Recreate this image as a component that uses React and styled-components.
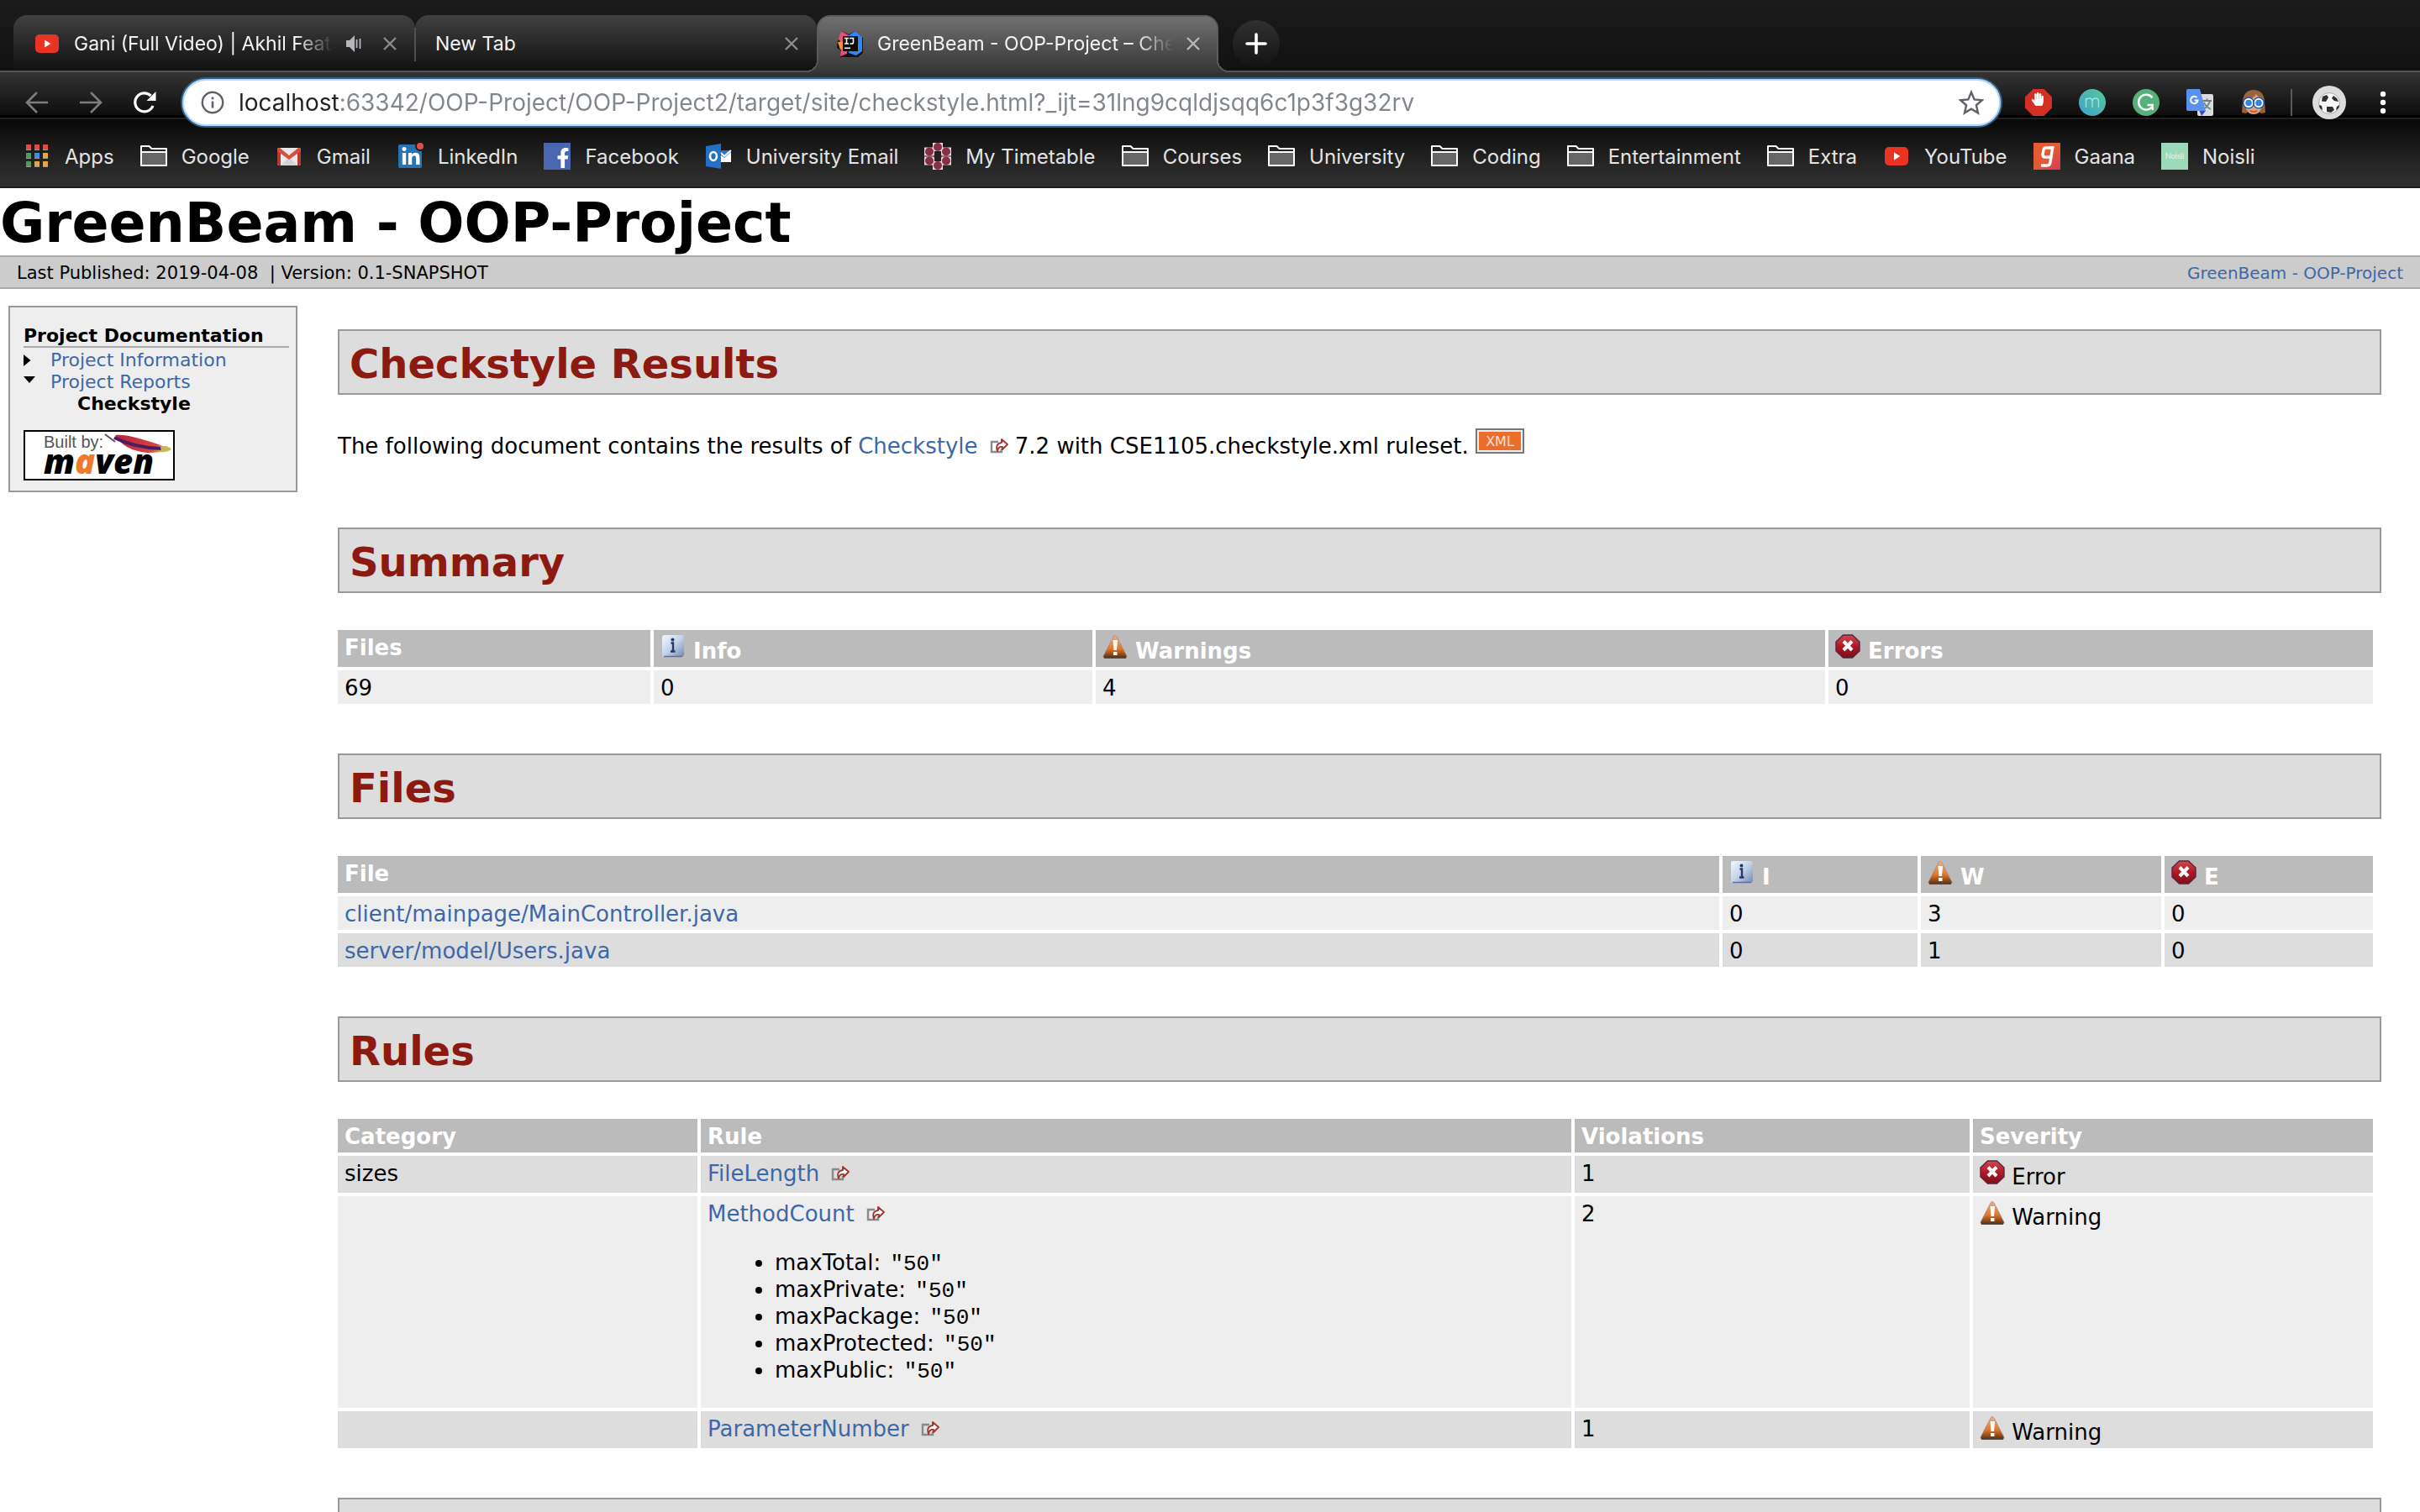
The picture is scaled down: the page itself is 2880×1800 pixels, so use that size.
import React from "react";
import styled, { createGlobalStyle, css } from "styled-components";
import { FaHandPaper, FaFacebookF, FaLinkedinIn } from "react-icons/fa";

const UI = `Inter, "Liberation Sans", sans-serif`;
const DOC = `"DejaVu Sans", Verdana, sans-serif`;
const LINK = "#3d68a8";

const GlobalStyle = createGlobalStyle`
  *, *::before, *::after { box-sizing: border-box; }
  body { margin: 0; background: #fff; }
  button { border: 0; padding: 0; background: none; font: inherit; color: inherit; }
  a { text-decoration: none; color: inherit; }
  svg { flex: none; }
`;

/* ---------- browser window ---------- */

const Window = styled.div`
  height: 100vh;
  display: flex;
  flex-direction: column;
  overflow: hidden;
`;

const Chrome = styled.header`
  flex: none;
  font-family: ${UI};
  background: #111;
`;

const TabStrip = styled.nav`
  display: flex;
  align-items: flex-end;
  height: 86px;
  padding-left: 16px;
  border-bottom: 2px solid #555;
  background: linear-gradient(#1c1c1c, #111);
`;

const activeTab = css`
  z-index: 1;
  height: 68px;
  margin-bottom: -2px;
  border: 2px solid #5c5c5c;
  border-bottom: 0;
  padding: 0 20px 2px 22px;
  background: linear-gradient(#707070, #363636);
  &::before,
  &::after {
    content: "";
    position: absolute;
    bottom: 0;
    width: 14px;
    height: 14px;
  }
  &::before {
    left: -14px;
    background: radial-gradient(circle at 0 0, transparent 12px, #555 12px, #555 14px, #383838 14px);
  }
  &::after {
    right: -14px;
    background: radial-gradient(circle at 100% 0, transparent 12px, #555 12px, #555 14px, #383838 14px);
  }
`;

const Tab = styled.div`
  position: relative;
  display: flex;
  align-items: center;
  gap: 16px;
  flex: 0 1 478px;
  min-width: 0;
  height: 66px;
  padding: 2px 22px 0 24px;
  border-radius: 16px 16px 0 0;
  background: linear-gradient(#404040, #111);
  color: #f4f4f4;
  ${(p) => p.$active && activeTab}
`;

const TabDivider = styled.span`
  align-self: center;
  width: 2px;
  height: 40px;
  margin: 22px -1px 0;
  z-index: 1;
  background: #505050;
`;

const TabTitle = styled.span`
  flex: 1;
  min-width: 0;
  overflow: hidden;
  white-space: nowrap;
  font-size: 23px;
  line-height: 32px;
  mask-image: ${(p) => (p.$fade ? "linear-gradient(to left, transparent, #000 44px)" : "none")};
`;

const TabClose = styled.button`
  display: flex;
  color: ${(p) => (p.$active ? "#b8b8b8" : "#8c8c8c")};
`;

const NewTab = styled.button`
  display: flex;
  align-items: center;
  justify-content: center;
  align-self: flex-end;
  width: 56px;
  height: 56px;
  margin: 0 0 4px 17px;
  border-radius: 50%;
  background: linear-gradient(#303030, #131313);
`;

const Toolbar = styled.div`
  position: relative;
  z-index: 1;
  height: 56px;
  border-bottom: 2px solid #202020;
  background: linear-gradient(#343434, #0e0e0e 50px, #000 52px);
`;

const ToolbarRow = styled.div`
  display: flex;
  align-items: center;
  height: 72px;
  padding: 0 40px 0 30px;
`;

const NavButtons = styled.div`
  display: flex;
  gap: 36px;
  margin-right: 29px;
`;

const IconButton = styled.button`
  display: flex;
  color: ${(p) => p.$color || "#fff"};
`;

const Omnibox = styled.label`
  flex: 1;
  display: flex;
  align-items: center;
  gap: 17px;
  height: 60px;
  padding: 0 20px 0 22px;
  border: 2px solid #2f5f88;
  border-radius: 30px;
  background: #fff;
  box-shadow: inset 0 0 0 2px #b3d8fb;
`;

const UrlInput = styled.input`
  flex: 1;
  min-width: 0;
  height: 44px;
  padding: 0;
  border: 0;
  outline: 0;
  font-family: ${UI};
  font-size: 28px;
  color: transparent;
  background: linear-gradient(to right, #202124 122px, #80868b 122px);
  background-clip: text;
  -webkit-background-clip: text;
`;

const Extensions = styled.div`
  display: flex;
  align-items: center;
  gap: 32px;
  margin-left: 27px;
`;

const Separator = styled.span`
  width: 2px;
  height: 32px;
  margin: 0 24px 0 28px;
  background: #5a5a5a;
`;

const Menu = styled(IconButton)`
  margin-left: 40px;
`;

const Bookmarks = styled.nav`
  display: flex;
  gap: 31px;
  height: 82px;
  padding: 8px 28px 0;
  border-bottom: 2px solid #1c1c1c;
  background: linear-gradient(#080808, #2f2f2f 90%);
`;

const Bookmark = styled.a`
  display: flex;
  align-items: center;
  gap: 17px;
  font-size: 24px;
  white-space: nowrap;
  color: #e4e4e4;
`;

/* ---------- document ---------- */

const Page = styled.div`
  flex: 1;
  min-height: 0;
  overflow: hidden;
  background: #fff;
  color: #000;
  font-family: ${DOC};
  font-size: 26px;
  line-height: 32px;
`;

const Banner = styled.h1`
  margin: 0;
  padding-top: 4px;
  font-size: 65px;
  line-height: 76px;
  font-weight: 700;
`;

const Breadcrumbs = styled.div`
  display: flex;
  justify-content: space-between;
  padding: 2px 20px 0;
  border: solid #aaa;
  border-width: 2px 0;
  background: #ccc;
  font-size: 20px;
  line-height: 34px;
  white-space: pre;
`;

const Published = styled.span`
  font-size: 21px;
`;

const Link = styled.a`
  color: ${LINK};
`;

const Columns = styled.div`
  display: flex;
  align-items: flex-start;
`;

const Sidebar = styled.aside`
  flex: none;
  width: 344px;
  margin: 20px 48px 0 10px;
  padding: 22px 8px 12px 16px;
  border: 2px solid #999;
  background: #eee;
  font-size: 22px;
  line-height: 26px;
`;

const SideTitle = styled.h5`
  margin: 0;
  border-bottom: 2px solid #aaa;
  font-size: 22px;
  line-height: 24px;
`;

const SideList = styled.ul`
  margin: 0;
  padding: 2px 0 0;
  list-style: none;
`;

const SideItem = styled.li`
  display: flex;
  align-items: center;
  padding-left: ${(p) => (p.$current ? "64px" : "0")};
  font-weight: ${(p) => (p.$current ? 700 : 400)};
`;

const Marker = styled.span`
  display: flex;
  width: 32px;
`;

const MavenBadge = styled.a`
  display: flex;
  margin-top: 18px;
`;

const Content = styled.main`
  flex: 1;
  min-width: 0;
  padding: 48px 46px 0 0;
`;

const Section = styled.section`
  margin-bottom: ${(p) => (p.$wide ? "81px" : "55px")};
`;

const Heading = styled.h2`
  height: 78px;
  margin: 0 0 44px;
  padding: 8px 12px 4px;
  border: 2px solid #999;
  background: #ddd;
  color: #8c1a10;
  font-size: 48px;
  line-height: 62px;
  font-weight: 700;
`;

const Intro = styled.p`
  margin: -4px 0 0;
`;

const Table = styled.table`
  width: calc(100% - 6px);
  table-layout: fixed;
  border-collapse: separate;
  border-spacing: 0;
`;

const cell = css`
  padding: 5px 8px 3px;
  border: solid #fff;
  border-width: 0 4px 4px 0;
  text-align: left;
  vertical-align: top;
`;

const Th = styled.th`
  ${cell}
  background: #bbb;
  color: #fff;
  font-weight: 700;
`;

const Row = styled.tr`
  background: ${(p) => (p.$dark ? "#ddd" : "#eee")};
`;

const Td = styled.td`
  ${cell}
`;

const Params = styled.ul`
  margin: 26px 0;
  padding-left: 80px;
`;

const Code = styled.code`
  margin-left: 3px;
  font-family: "Liberation Mono", monospace;
  font-size: 26px;
  line-height: 1;
`;

const InlineSvg = styled.svg`
  margin-left: ${(p) => (p.$gap ? "14px" : "0")};
  vertical-align: baseline;
`;

/* ---------- browser icons ---------- */

const CloseIcon = () => (
  <svg width="16" height="16" viewBox="0 0 16 16" stroke="currentColor" strokeWidth="2.4">
    <path d="M1 1l14 14M15 1L1 15" />
  </svg>
);

const YouTubeIcon = () => (
  <svg width="32" height="32" viewBox="0 0 32 32">
    <rect x="2" y="5" width="28" height="22" rx="5" fill="#e93323" />
    <path d="M13 11.500l7.500 4.500-7.500 4.500z" fill="#fff" />
  </svg>
);

const SpeakerIcon = () => (
  <svg width="28" height="20" viewBox="0 0 28 20" fill="#b4b6ba">
    <path d="M0 6h4l6-6v20l-6-6H0z" />
    <path d="M12.500 5v10M16.500 4v12" stroke="#b4b6ba" strokeWidth="1.800" />
  </svg>
);

const IntelliJIcon = () => (
  <svg width="32" height="32" viewBox="0 0 32 32">
    <path d="M5 1l9 4 8-4 9 8v18l-6 5H4l2-7-6-4 1-8 3-3z" fill="#111" />
    <path d="M5 1l9 5-2 22-8 3 2-14-4-7z" fill="#ee4f72" />
    <path d="M1 14l8-1v9l-5 1z" fill="#f79433" />
    <path d="M14 6l8-5 8 7v17l-7 5-9-3z" fill="#2f86f5" />
    <rect x="7" y="7" width="18" height="18" fill="#0d0d0d" />
    <path d="M9 9.500h5M9 16h5M11.500 9.500V16M15 9.500h4.500v5q0 1.500-2 1.500h-2" stroke="#fff" strokeWidth="1.600" fill="none" />
    <rect x="9" y="20.500" width="7" height="1.600" fill="#fff" />
  </svg>
);

const BackIcon = ({ flip }) => (
  <svg width="28" height="28" viewBox="0 0 28 28" fill="none" stroke="currentColor" strokeWidth="2.600">
    <path d={flip ? "M1 14h25M14 2l12 12-12 12" : "M27 14H2M14 2L2 14l12 12"} />
  </svg>
);

const ReloadIcon = () => (
  <svg width="28" height="28" viewBox="0 0 28 28">
    <path d="M24 18A11 11 0 1 1 21.500 6" fill="none" stroke="currentColor" strokeWidth="3.200" />
    <path d="M27.500 1v11h-11z" fill="currentColor" />
  </svg>
);

const InfoCircle = () => (
  <svg width="28" height="28" viewBox="0 0 28 28">
    <circle cx="14" cy="14" r="12.200" fill="none" stroke="#5f6368" strokeWidth="2.400" />
    <path d="M14 12.500v8M14 7.500v2.800" stroke="#5f6368" strokeWidth="2.600" />
  </svg>
);

const StarIcon = () => (
  <svg width="30" height="30" viewBox="0 0 30 30">
    <path d="M15 2.800l3.600 8.600 9.300.8-7 6.100 2.100 9.100-8-4.800-8 4.800 2.100-9.100-7-6.100 9.300-.8z" fill="none" stroke="#5f6368" strokeWidth="2.400" />
  </svg>
);

const PlusIcon = () => (
  <svg width="26" height="26" viewBox="0 0 26 26" stroke="#fff" strokeWidth="3.600" strokeLinecap="round">
    <path d="M13 2v22M2 13h22" />
  </svg>
);

const AdBlockIcon = () => (
  <svg width="32" height="32" viewBox="0 0 32 32">
    <path d="M9.500 0h13L32 9.500v13L22.500 32h-13L0 22.500v-13z" fill="#d42f24" />
    <FaHandPaper x="7" y="4" width="20" height="23" color="#fff" />
  </svg>
);

const MIcon = () => (
  <svg width="32" height="32" viewBox="0 0 32 32">
    <defs>
      <linearGradient id="mg" x1="1" y1="0" x2="0" y2="1">
        <stop offset="0" stopColor="#57c89a" />
        <stop offset="1" stopColor="#41a1cd" />
      </linearGradient>
    </defs>
    <circle cx="16" cy="16" r="16" fill="url(#mg)" />
    <path d="M8.500 22V11M8.500 15q0-4 4-4 3.500 0 3.500 4v7M16 15q0-4 4-4 3.500 0 3.500 4v7" fill="none" stroke="#a5e4d8" strokeWidth="1.300" />
  </svg>
);

const GrammarlyIcon = () => (
  <svg width="32" height="32" viewBox="0 0 32 32">
    <circle cx="16" cy="16" r="16" fill="#56b07a" />
    <path d="M23.500 10.500A9 9 0 1 0 23 21.500" fill="none" stroke="#fff" strokeWidth="2.400" />
    <path d="M17.500 19h6.300v6" fill="none" stroke="#fff" strokeWidth="2.400" />
  </svg>
);

const TranslateIcon = () => (
  <svg width="32" height="32" viewBox="0 0 32 32">
    <rect x="13" y="6" width="19" height="26" rx="2" fill="#dcdcdc" />
    <path d="M19 14h11M24.500 11.500V14M28 14q-2 7-8 10M21 16q2 5 8 8" stroke="#6d8089" strokeWidth="1.800" fill="none" />
    <path d="M15.500 26h7.500l-5 6z" fill="#3450b5" />
    <path d="M2 0h14l7 26H2q-2 0-2-2V2q0-2 2-2z" fill="#5a90ee" />
    <path d="M12.500 10.200a4.200 4.200 0 1 0 1 3.300H9.700" stroke="#fff" strokeWidth="2" fill="none" />
  </svg>
);

const GogglesIcon = () => (
  <svg width="32" height="32" viewBox="0 0 32 32">
    <path d="M16 1q12 0 13 14l1 13-5 1-4-3h-10l-4 3-5-1 1-13Q4 1 16 1z" fill="#97633c" />
    <path d="M6 14q10-2 13-8 4 5 7 8v6q-2 10-10 10T6 20z" fill="#e0a27c" />
    <path d="M12 26q4 2 8 0" stroke="#b84a42" strokeWidth="1.600" fill="none" />
    <rect x="3" y="14" width="26" height="4" fill="#1d58a8" />
    <circle cx="10" cy="16.500" r="4.800" fill="#2e86e8" stroke="#fff" strokeWidth="2" />
    <circle cx="22" cy="16.500" r="4.800" fill="#2e86e8" stroke="#fff" strokeWidth="2" />
    <circle cx="10" cy="16.500" r="6.300" fill="none" stroke="#1d58a8" strokeWidth="1.200" />
    <circle cx="22" cy="16.500" r="6.300" fill="none" stroke="#1d58a8" strokeWidth="1.200" />
  </svg>
);

const ProfileIcon = () => (
  <svg width="40" height="40" viewBox="0 0 40 40">
    <circle cx="20" cy="20" r="20" fill="#dcdcdc" />
    <circle cx="20" cy="21" r="12.500" fill="#f6f6f6" stroke="#aaa" strokeWidth="1" />
    <path d="M12 13l5-2 2 3-3 5-5-.5zM25 12l4 3 2 4-5-1-3-3zM17 25h7l2 4-4 3-5-1zM8 23l3 1 1 5q-4-2-4-6zM32 23l-3 2-1 4q4-2 4-6z" fill="#2d2d2d" />
  </svg>
);

const DotsIcon = () => (
  <svg width="8" height="28" viewBox="0 0 8 28" fill="#fff">
    <circle cx="4" cy="4" r="3.200" />
    <circle cx="4" cy="14" r="3.200" />
    <circle cx="4" cy="24" r="3.200" />
  </svg>
);

const appColors = ["#e8493d", "#e8493d", "#e8493d", "#529a5c", "#4489f0", "#e8a736", "#529a5c", "#e8a736", "#e8a736"];

const AppsIcon = () => (
  <svg width="32" height="32" viewBox="0 0 32 32">
    {appColors.map((c, i) => (
      <g key={i}>
        <rect x={3 + (i % 3) * 10} y={2 + Math.floor(i / 3) * 10} width="6" height="7" fill="#999" />
        <rect x={3 + (i % 3) * 10} y={2 + Math.floor(i / 3) * 10} width="6" height="6" fill={c} />
      </g>
    ))}
  </svg>
);

const FolderIcon = () => (
  <svg width="32" height="32" viewBox="0 0 32 32">
    <path d="M1 27V4h9.500l3 3H31v20H1z" fill="#222" stroke="#fff" strokeWidth="2" strokeLinejoin="round" />
    <path d="M1 11h30" stroke="#fff" strokeWidth="2" />
    <rect x="2" y="12" width="28" height="14" fill="#666" />
  </svg>
);

const GmailIcon = () => (
  <svg width="32" height="32" viewBox="0 0 32 32">
    <rect x="2" y="6" width="28" height="21" rx="2" fill="#e8e8e8" />
    <path d="M6 27l10-10 10 10z" fill="#d4d4d4" />
    <path d="M2 8h4v19H4q-2 0-2-2zM30 8h-4v19h2q2 0 2-2z" fill="#b33c2e" />
    <path d="M2 8q0-2 2-2h1l11 9 11-9h1q2 0 2 2v2L16 20 2 10z" fill="#d25142" />
  </svg>
);

const LinkedInIcon = () => (
  <svg width="32" height="32" viewBox="0 0 32 32">
    <rect x="2" y="2" width="28" height="28" rx="2" fill="#2a73b2" />
    <FaLinkedinIn x="5" y="5" width="22" height="22" color="#fff" />
    <circle cx="28" cy="4" r="6" fill="#1c1c1c" />
    <circle cx="28" cy="4" r="4" fill="#e04f42" />
  </svg>
);

const FacebookIcon = () => (
  <svg width="32" height="32" viewBox="0 0 32 32">
    <rect width="32" height="32" fill="#4867b0" />
    <FaFacebookF x="11" y="6" width="18" height="26" color="#fff" />
  </svg>
);

const OutlookIcon = () => (
  <svg width="32" height="32" viewBox="0 0 32 32">
    <path d="M18 9h13v14H18z" fill="#fff" />
    <path d="M18 9h13v2l-8 7-5-4z" fill="#2a74c9" />
    <path d="M19 12l4 4 8-7" stroke="#fff" strokeWidth="2" fill="none" />
    <path d="M1 4l18-3v30L1 28z" fill="#2470c4" />
    <ellipse cx="10" cy="16" rx="4" ry="5" fill="none" stroke="#fff" strokeWidth="2.600" />
  </svg>
);

const petals = [[16, 5], [26, 10.5], [26, 21.5], [16, 27], [6, 21.5], [6, 10.5]];

const TimetableIcon = () => (
  <svg width="32" height="32" viewBox="0 0 32 32">
    {petals.map(([x, y]) => (
      <rect key={`${x}-${y}`} x={x - 6} y={y - 5} width="12" height="10" fill="#edd5da" />
    ))}
    {petals.map(([x, y]) => (
      <circle key={`${x}-${y}`} cx={x} cy={y} r="5" fill="#872f45" />
    ))}
    <circle cx="16" cy="16" r="4.500" fill="#222" />
  </svg>
);

const GaanaIcon = () => (
  <svg width="32" height="32" viewBox="0 0 32 32">
    <defs>
      <linearGradient id="ga" x1="0" y1="0" x2="1" y2="1">
        <stop offset="0.500" stopColor="#e35b34" />
        <stop offset="1" stopColor="#d8385a" />
      </linearGradient>
    </defs>
    <rect width="32" height="32" fill="url(#ga)" />
    <path d="M23 6h-8q-3 0-3 3l-1 5q0 3 3 3h6M23 4l-3 19q0 4-4 4H9" stroke="#fff" strokeWidth="3.400" fill="none" />
  </svg>
);

const NoisliIcon = () => (
  <svg width="32" height="32" viewBox="0 0 32 32">
    <rect width="32" height="32" fill="#9bd9b8" />
    <text x="16" y="19" textAnchor="middle" fontFamily="Lato, sans-serif" fontSize="9" fill="#e9f8f0">Noisli</text>
  </svg>
);

/* ---------- document icons ---------- */

const ExternalIcon = () => (
  <InlineSvg $gap width="22" height="18" viewBox="0 0 22 18">
    <path d="M10 4H2v12h12v-4" fill="none" stroke="#8a8a8a" strokeWidth="2.400" />
    <path d="M14 1l7 6-6 6V10q-5-1-6 5-3-9 5-10z" fill="#fff" stroke="#a2322c" strokeWidth="1.800" strokeLinejoin="round" />
  </InlineSvg>
);

const InfoIcon = () => (
  <InlineSvg width="30" height="29" viewBox="0 0 30 29">
    <defs>
      <linearGradient id="inf" x1="0" y1="0" x2="1" y2="1">
        <stop offset="0" stopColor="#f5f9ff" />
        <stop offset="0.500" stopColor="#c4d3e8" />
        <stop offset="1" stopColor="#7088b4" />
      </linearGradient>
    </defs>
    <rect x="2" y="1" width="26" height="26" rx="3" fill="url(#inf)" />
    <path d="M4 26.500h22" stroke="#5d719c" strokeWidth="1.500" />
    <path d="M12.500 10.500h2.500V20M12 20.500h5.500" stroke="#223a6c" strokeWidth="2.400" fill="none" />
    <circle cx="14.500" cy="6.500" r="2" fill="#223a6c" />
  </InlineSvg>
);

const WarningIcon = () => (
  <InlineSvg width="30" height="29" viewBox="0 0 30 29">
    <defs>
      <linearGradient id="wrn" x1="0" y1="0" x2="0" y2="1">
        <stop offset="0" stopColor="#f0b088" />
        <stop offset="0.600" stopColor="#e07628" />
        <stop offset="1" stopColor="#5c3014" />
      </linearGradient>
    </defs>
    <path d="M15 1.500q1.500 0 2.500 2.500L29 26q.5 2-1.500 2h-25Q.5 28 1 26L12.500 4q1-2.500 2.500-2.500z" fill="url(#wrn)" stroke="#a58a86" strokeWidth="0.800" />
    <path d="M2 28h26" stroke="#4a3428" strokeWidth="1.600" />
    <path d="M12.500 7h5.500l-1 12h-3.500z" fill="#fff" />
    <rect x="13" y="21" width="4.500" height="4" fill="#fff" />
  </InlineSvg>
);

const ErrorIcon = () => (
  <InlineSvg width="30" height="29" viewBox="0 0 30 29">
    <defs>
      <linearGradient id="err" x1="0" y1="0" x2="0" y2="1">
        <stop offset="0" stopColor="#cf4a52" />
        <stop offset="0.500" stopColor="#b01824" />
        <stop offset="1" stopColor="#7c101a" />
      </linearGradient>
    </defs>
    <path d="M9.500 1h11L29 9v11l-8.500 8h-11L1 20V9z" fill="url(#err)" stroke="#5a2440" strokeWidth="1.400" />
    <path d="M10 8.500l10 10.500M20 8.500L10 19" stroke="#fff" strokeWidth="4" />
  </InlineSvg>
);

const XmlIcon = () => (
  <InlineSvg width="58" height="30" viewBox="0 0 58 30">
    <rect width="58" height="30" fill="#777" />
    <rect x="2" y="2" width="54" height="26" fill="#f0f0f0" />
    <rect x="4" y="4" width="50" height="22" fill="#ed6d2d" />
    <text x="29" y="21" textAnchor="middle" fontFamily="DejaVu Sans, sans-serif" fontSize="16" fill="#fbe0d0">XML</text>
  </InlineSvg>
);

const ArrowRight = () => (
  <svg width="14" height="14" viewBox="0 0 14 14">
    <path d="M0 0l8.500 7L0 14z" />
  </svg>
);

const ArrowDown = () => (
  <svg width="14" height="14" viewBox="0 0 14 14">
    <path d="M0 0h14L7 8z" />
  </svg>
);

const MavenLogo = () => (
  <svg width="180" height="60" viewBox="0 0 180 60" role="img" overflow="visible">
    <defs>
      <linearGradient id="fth" x1="0" y1="0" x2="1" y2="0.300">
        <stop offset="0" stopColor="#b5293c" />
        <stop offset="0.400" stopColor="#c8303a" />
        <stop offset="0.850" stopColor="#d3483c" />
        <stop offset="1" stopColor="#c9b048" />
      </linearGradient>
    </defs>
    <rect x="1" y="1" width="178" height="58" fill="#fff" stroke="#000" strokeWidth="2" />
    <text x="24" y="21" fontFamily="Liberation Sans, sans-serif" fontSize="20" fill="#555">Built by:</text>
    <path d="M97 5l12 9" stroke="#555" strokeWidth="2" />
    <path d="M109 6q12-1 32 5 22 6 34 12-8 4-28 4-28-3-38-21z" fill="url(#fth)" />
    <path d="M108 9q24 12 56 13" stroke="#4a1c66" strokeWidth="4" fill="none" />
    <path d="M163 20q8-3 13 3-6 4-12 3z" fill="#cdb651" />
    <text x="24" y="52" fontFamily="Open Sans, sans-serif" fontWeight="800" fontStyle="italic" fontSize="40">
      m<tspan fill="#f07a2c">a</tspan>ven
    </text>
  </svg>
);

/* ---------- data ---------- */

const bookmarks = [
  ["Apps", AppsIcon],
  ["Google", FolderIcon],
  ["Gmail", GmailIcon],
  ["LinkedIn", LinkedInIcon],
  ["Facebook", FacebookIcon],
  ["University Email", OutlookIcon],
  ["My Timetable", TimetableIcon],
  ["Courses", FolderIcon],
  ["University", FolderIcon],
  ["Coding", FolderIcon],
  ["Entertainment", FolderIcon],
  ["Extra", FolderIcon],
  ["YouTube", YouTubeIcon],
  ["Gaana", GaanaIcon],
  ["Noisli", NoisliIcon],
];

const extensions = [
  ["Ad blocker", AdBlockIcon],
  ["Momentum", MIcon],
  ["Grammar", GrammarlyIcon],
  ["Translate", TranslateIcon],
  ["Goggles", GogglesIcon],
];

const files = [
  ["client/mainpage/MainController.java", 0, 3, 0],
  ["server/model/Users.java", 0, 1, 0],
];

const rules = [
  { category: "sizes", rule: "FileLength", count: 1, Icon: ErrorIcon, severity: "Error" },
  {
    rule: "MethodCount",
    count: 2,
    Icon: WarningIcon,
    severity: "Warning",
    params: ["maxTotal", "maxPrivate", "maxPackage", "maxProtected", "maxPublic"],
  },
  { rule: "ParameterNumber", count: 1, Icon: WarningIcon, severity: "Warning" },
];

function DataTable({ widths, head, children }) {
  return (
    <Table>
      <colgroup>
        {widths.map((w, i) => (
          <col key={i} width={w} />
        ))}
      </colgroup>
      <thead>
        <tr>
          {head.map((h, i) => (
            <Th key={i}>{h}</Th>
          ))}
        </tr>
      </thead>
      <tbody>{children}</tbody>
    </Table>
  );
}

function BrowserChrome() {
  return (
    <Chrome>
      <TabStrip>
        <Tab>
          <YouTubeIcon />
          <TabTitle $fade>Gani (Full Video) | Akhil Feat</TabTitle>
          <SpeakerIcon />
          <TabClose aria-label="Close tab"><CloseIcon /></TabClose>
        </Tab>
        <TabDivider />
        <Tab>
          <TabTitle>New Tab</TabTitle>
          <TabClose aria-label="Close tab"><CloseIcon /></TabClose>
        </Tab>
        <Tab $active>
          <IntelliJIcon />
          <TabTitle $fade>GreenBeam - OOP-Project – Checkstyle</TabTitle>
          <TabClose $active aria-label="Close tab"><CloseIcon /></TabClose>
        </Tab>
        <NewTab aria-label="New tab"><PlusIcon /></NewTab>
      </TabStrip>
      <Toolbar>
        <ToolbarRow>
          <NavButtons>
            <IconButton $color="#7d7d7d" aria-label="Back"><BackIcon /></IconButton>
            <IconButton $color="#7d7d7d" aria-label="Forward"><BackIcon flip /></IconButton>
            <IconButton aria-label="Reload"><ReloadIcon /></IconButton>
          </NavButtons>
          <Omnibox>
            <InfoCircle />
            <UrlInput
              aria-label="Address"
              spellCheck={false}
              defaultValue="localhost:63342/OOP-Project/OOP-Project2/target/site/checkstyle.html?_ijt=31lng9cqldjsqq6c1p3f3g32rv"
            />
            <StarIcon />
          </Omnibox>
          <Extensions>
            {extensions.map(([name, Icon]) => (
              <IconButton key={name} aria-label={name}><Icon /></IconButton>
            ))}
          </Extensions>
          <Separator />
          <IconButton aria-label="Profile"><ProfileIcon /></IconButton>
          <Menu aria-label="Menu"><DotsIcon /></Menu>
        </ToolbarRow>
      </Toolbar>
      <Bookmarks>
        {bookmarks.map(([name, Icon]) => (
          <Bookmark key={name} href="#"><Icon />{name}</Bookmark>
        ))}
      </Bookmarks>
    </Chrome>
  );
}

export default function App() {
  return (
    <Window>
      <GlobalStyle />
      <BrowserChrome />
      <Page>
        <Banner>GreenBeam - OOP-Project</Banner>
        <Breadcrumbs>
          <Published>{"Last Published: 2019-04-08  | Version: 0.1-SNAPSHOT"}</Published>
          <Link href="#">GreenBeam - OOP-Project</Link>
        </Breadcrumbs>
        <Columns>
          <Sidebar>
            <SideTitle>Project Documentation</SideTitle>
            <SideList>
              <SideItem><Marker><ArrowRight /></Marker><Link href="#">Project Information</Link></SideItem>
              <SideItem><Marker><ArrowDown /></Marker><Link href="#">Project Reports</Link></SideItem>
              <SideItem $current>Checkstyle</SideItem>
            </SideList>
            <MavenBadge href="#" aria-label="Built by Maven"><MavenLogo /></MavenBadge>
          </Sidebar>
          <Content>
            <Section $wide>
              <Heading>Checkstyle Results</Heading>
              <Intro>
                The following document contains the results of <Link href="#">Checkstyle<ExternalIcon /></Link> 7.2 with
                CSE1105.checkstyle.xml ruleset. <a href="#" aria-label="XML feed"><XmlIcon /></a>
              </Intro>
            </Section>
            <Section>
              <Heading>Summary</Heading>
              <DataTable
                widths={[376, 526, 872, 652]}
                head={["Files", <><InfoIcon /> Info</>, <><WarningIcon /> Warnings</>, <><ErrorIcon /> Errors</>]}
              >
                <Row><Td>69</Td><Td>0</Td><Td>4</Td><Td>0</Td></Row>
              </DataTable>
            </Section>
            <Section>
              <Heading>Files</Heading>
              <DataTable
                widths={[1648, 236, 290, 252]}
                head={["File", <><InfoIcon /> I</>, <><WarningIcon /> W</>, <><ErrorIcon /> E</>]}
              >
                {files.map(([name, ...counts], i) => (
                  <Row key={name} $dark={i % 2 === 1}>
                    <Td><Link href="#">{name}</Link></Td>
                    {counts.map((c, j) => <Td key={j}>{c}</Td>)}
                  </Row>
                ))}
              </DataTable>
            </Section>
            <Section>
              <Heading>Rules</Heading>
              <DataTable widths={[432, 1040, 474, 480]} head={["Category", "Rule", "Violations", "Severity"]}>
                {rules.map((r, i) => (
                  <Row key={r.rule} $dark={i % 2 === 0}>
                    <Td>{r.category}</Td>
                    <Td>
                      <Link href="#">{r.rule}<ExternalIcon /></Link>
                      {r.params && (
                        <Params>
                          {r.params.map((p) => <li key={p}>{p}: <Code>"50"</Code></li>)}
                        </Params>
                      )}
                    </Td>
                    <Td>{r.count}</Td>
                    <Td><r.Icon /> {r.severity}</Td>
                  </Row>
                ))}
              </DataTable>
            </Section>
            <Heading aria-label="Details" />
          </Content>
        </Columns>
      </Page>
    </Window>
  );
}
